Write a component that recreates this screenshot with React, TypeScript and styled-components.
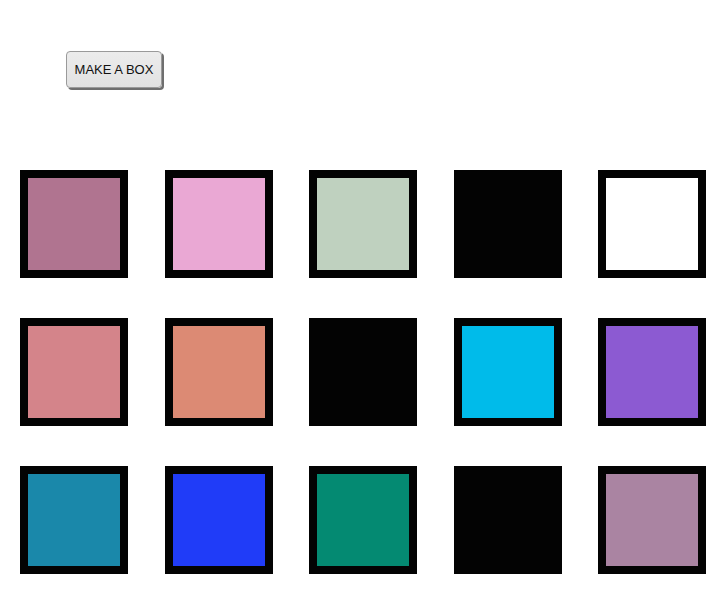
import styled, { createGlobalStyle } from "styled-components";

const boxes: { color: string }[] = [
  { color: "#b07490" },
  { color: "#eaa8d4" },
  { color: "#bfd1bf" },
  { color: "#030303" },
  { color: "#ffffff" },
  { color: "#d4848a" },
  { color: "#dc8a74" },
  { color: "#030303" },
  { color: "#00bbea" },
  { color: "#8c5ad2" },
  { color: "#1a88aa" },
  { color: "#203cf8" },
  { color: "#048a72" },
  { color: "#030303" },
  { color: "#aa84a2" },
];

const App = () => {
  return (
    <>
      <GlobalStyle />
      <Page>
        <Toolbar>
          <MakeButton type="button">MAKE A BOX</MakeButton>
        </Toolbar>
        <BoxGrid>
          {boxes.map((box, boxIndex) => (
            <Box key={boxIndex} $color={box.color} />
          ))}
        </BoxGrid>
      </Page>
    </>
  );
};

export default App;

const GlobalStyle = createGlobalStyle`
  html, body {
    margin: 0;
    padding: 0;
    background: #ffffff;
    font-family: "Liberation Sans", Arial, sans-serif;
  }
`;

const Page = styled.div`
  width: 725px;
  height: 600px;
  overflow: hidden;
`;

const Toolbar = styled.div`
  display: flex;
  align-items: flex-start;
  padding: 51px 0 0 66px;
  height: 170px;
  box-sizing: border-box;
`;

const MakeButton = styled.button`
  width: 96px;
  height: 37px;
  padding: 0;

  font-family: "Liberation Sans", Arial, sans-serif;
  font-size: 13px;
  color: #111111;

  background: linear-gradient(#ececec, #e2e2e2);
  border: 1px solid #9a9a9a;
  border-radius: 4px;
  box-shadow: 2px 2px 0 #6f6f6f;
`;

const BoxGrid = styled.div`
  display: grid;
  grid-template-columns: repeat(5, 108px);
  justify-content: space-between;
  row-gap: 40px;
  padding: 0 19px 0 20px;
`;

const Box = styled.div<{ $color: string }>`
  width: 108px;
  height: 108px;
  box-sizing: border-box;
  border: 8px solid #030303;
  background: ${(p) => p.$color};
`;
